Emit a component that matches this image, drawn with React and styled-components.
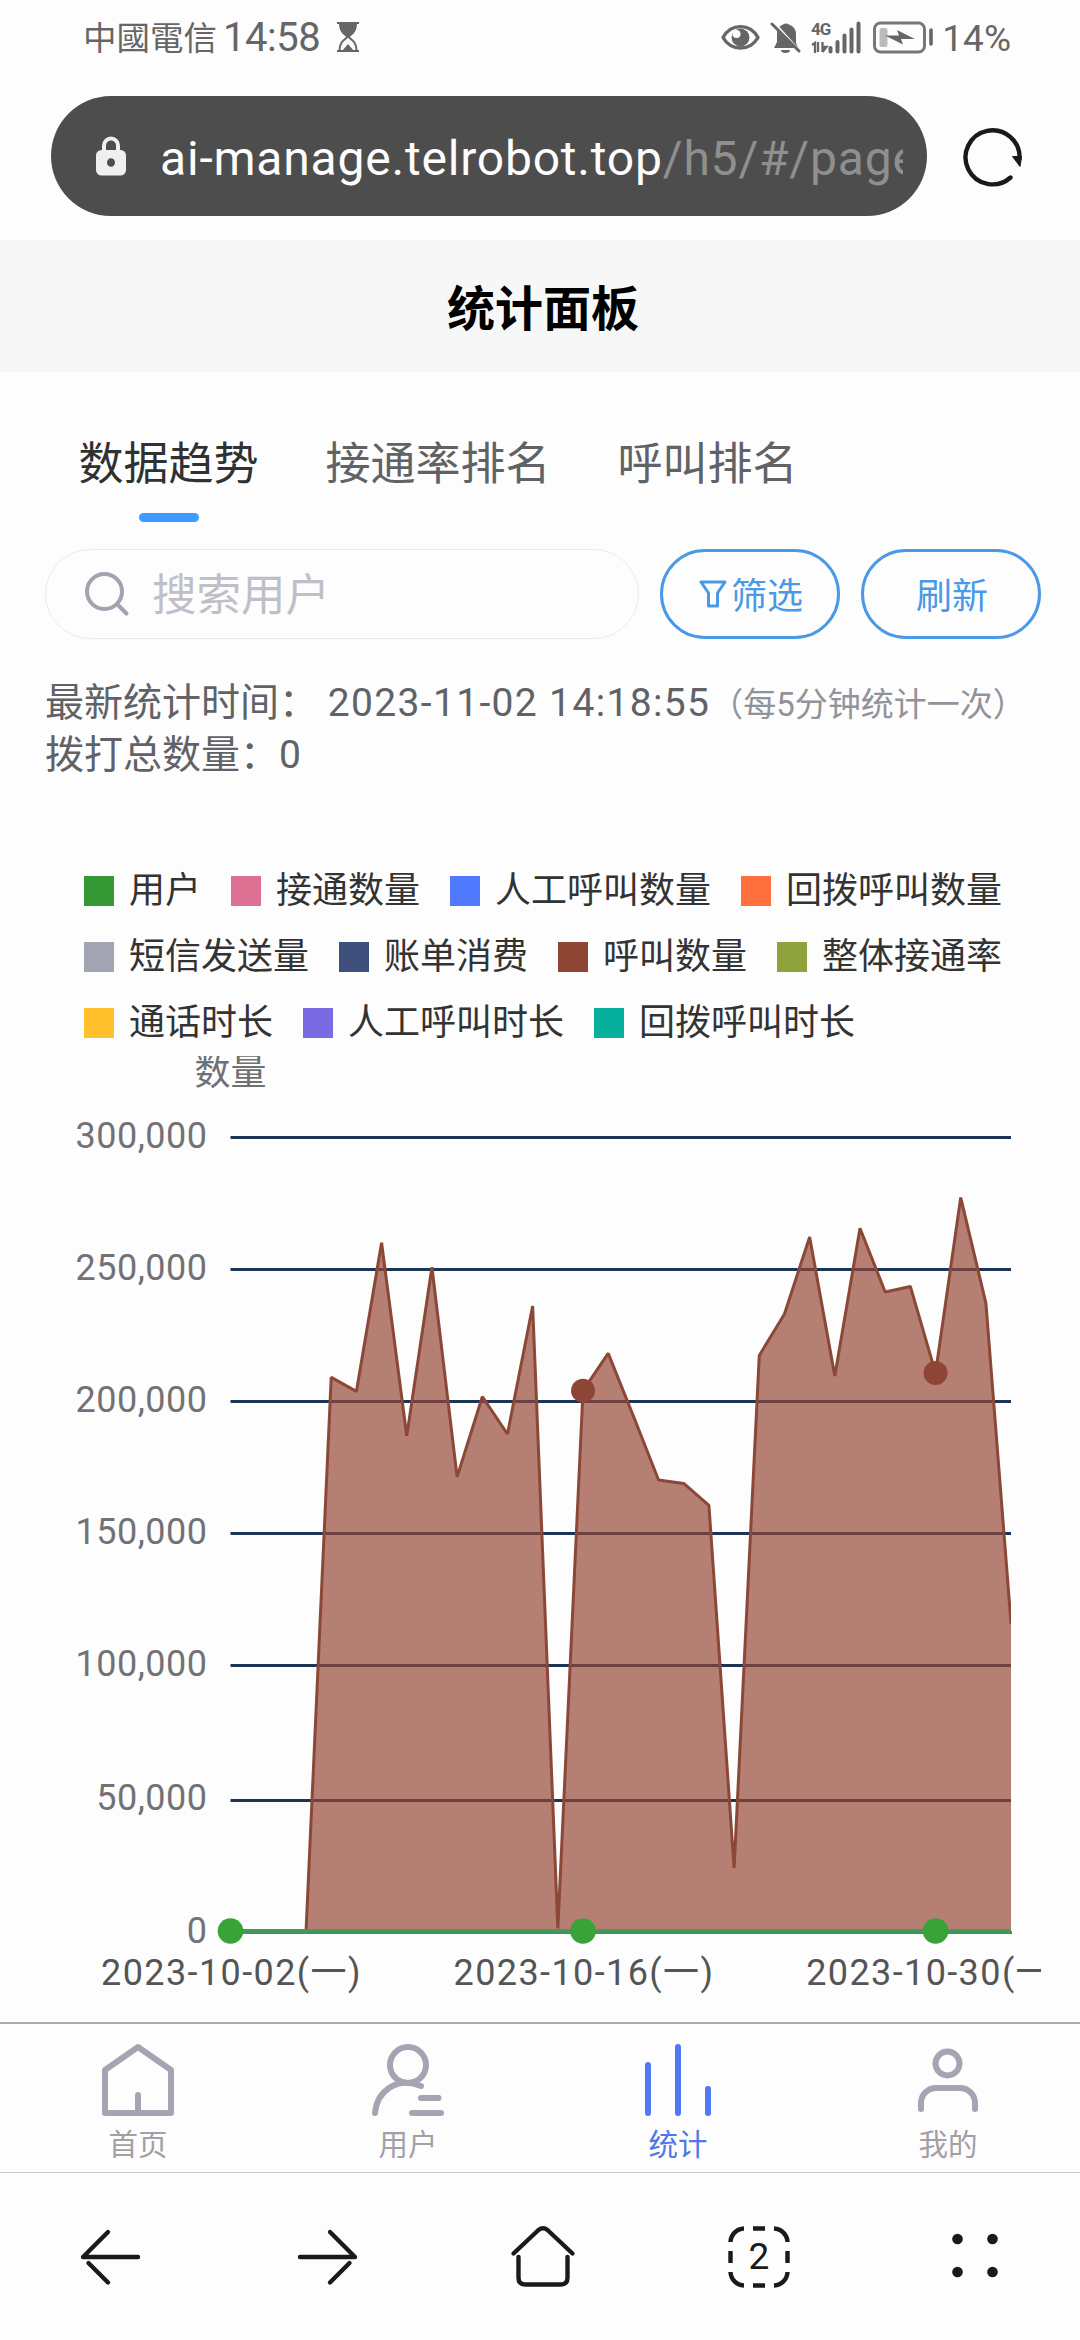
import React from "react";
import styled, { createGlobalStyle } from "styled-components";

const LEGEND = [
  [
    { label: "用户", color: "#349834" },
    { label: "接通数量", color: "#db7093" },
    { label: "人工呼叫数量", color: "#5079fd" },
    { label: "回拨呼叫数量", color: "#ff6f3e" },
  ],
  [
    { label: "短信发送量", color: "#a2a4b2" },
    { label: "账单消费", color: "#40507d" },
    { label: "呼叫数量", color: "#8f4534" },
    { label: "整体接通率", color: "#8fa33c" },
  ],
  [
    { label: "通话时长", color: "#ffc02b" },
    { label: "人工呼叫时长", color: "#7a6ae4" },
    { label: "回拨呼叫时长", color: "#06b09d" },
  ],
];

// daily call totals, 2023-10-02 to 2023-11-02
const CALLS = [
  0, 0, 0, 0, 209300, 204000, 260200, 187200, 251000, 171700, 202000, 187900,
  236300, 1000, 204300, 218400, 194700, 170500, 169200, 160900, 23800, 217600,
  233300, 262400, 209800, 265700, 241600, 243700, 211000, 277300, 237400,
  116100,
];

const Y_TICKS = [
  { label: "300,000", y: 81.5 },
  { label: "250,000", y: 213.5 },
  { label: "200,000", y: 345.5 },
  { label: "150,000", y: 477.5 },
  { label: "100,000", y: 609.5 },
  { label: "50,000", y: 744.5 },
];

const X_TICKS = [
  { label: "2023-10-02(一)", day: 0 },
  { label: "2023-10-16(一)", day: 14 },
  { label: "2023-10-30(一)", day: 28 },
];

const ZERO_Y = 875;
const LEFT = 230.5;
const RIGHT = 1011;
const dayX = (i) => LEFT + i * 25.18;
const valueY = (v) => ZERO_Y - (v / 300000) * 793.5;

const Chart = () => {
  const line = CALLS.map((v, i) => `${dayX(i)},${valueY(v)}`)
    .slice(3)
    .join(" ");

  return (
    <ChartSvg width="1080" height="966" viewBox="0 0 1080 966">
      <defs>
        <clipPath id="plot">
          <rect x="0" y="0" width={RIGHT} height="966" />
        </clipPath>
        <clipPath id="canvas">
          <rect x="0" y="0" width="1041" height="966" />
        </clipPath>
      </defs>
      <AxisName x="230.5" y="29">
        数量
      </AxisName>
      {Y_TICKS.map((tick) => (
        <g key={tick.label}>
          <line
            x1={LEFT}
            x2={RIGHT}
            y1={tick.y}
            y2={tick.y}
            stroke="#1c3557"
            strokeWidth="3"
          />
          <YLabel x="207.5" y={tick.label === "50,000" ? 753.5 : tick.y + 10.5}>
            {tick.label}
          </YLabel>
        </g>
      ))}
      <YLabel x="207.5" y="886.5">
        0
      </YLabel>
      <g clipPath="url(#plot)">
        <polygon
          points={`${line} ${dayX(31)},${ZERO_Y} ${dayX(3)},${ZERO_Y}`}
          fill="#944634"
          fillOpacity="0.69"
        />
        <polyline
          points={line}
          fill="none"
          stroke="#8c4837"
          strokeWidth="3"
          strokeLinejoin="bevel"
        />
      </g>
      <line
        x1={LEFT}
        x2={RIGHT + 1}
        y1="876.5"
        y2="876.5"
        stroke="#418c80"
        strokeWidth="3"
      />
      <line
        x1={LEFT}
        x2={RIGHT}
        y1="874.8"
        y2="874.8"
        stroke="#409a50"
        strokeWidth="3.6"
      />
      {[14, 28].map((d) => (
        <circle
          key={d}
          cx={dayX(d)}
          cy={valueY(CALLS[d])}
          r="12"
          fill="#8f4535"
        />
      ))}
      {X_TICKS.map((tick) => (
        <circle
          key={tick.day}
          cx={dayX(tick.day)}
          cy={ZERO_Y}
          r="12.8"
          fill="#38a437"
        />
      ))}
      <g clipPath="url(#canvas)">
        {X_TICKS.map((tick) => (
          <XLabel key={tick.day} x={dayX(tick.day) + 1} y="929">
            {tick.label}
          </XLabel>
        ))}
      </g>
    </ChartSvg>
  );
};

const StatusIcons = () => (
  <svg width="215" height="34" viewBox="0 0 215 34">
    {/* eye */}
    <path
      d="M3 17.5C11 3 30 3 38 17.5C30 31.500 11 31.500 3 17.5Z"
      fill="none"
      stroke="#666"
      strokeWidth="3.4"
      strokeLinejoin="round"
    />
    <circle cx="20.500" cy="17.500" r="9" fill="#666" />
    <circle cx="16.500" cy="14" r="4" fill="#fdfdfd" />
    {/* muted bell */}
    <path
      d="M54 28h24l-2-5V14c0-5-3-8-7-9.500a4.500 3 0 0 0-6 0c-4 1.500-6 5-6 9.500v8z"
      fill="#666"
    />
    <path d="M61 30h9a4.500 3 0 0 1-9 0z" fill="#666" />
    <path d="M53 2l27 30" stroke="#fdfdfd" strokeWidth="3" />
    <path
      d="M52 4l27 27"
      stroke="#666"
      strokeWidth="3"
      strokeLinecap="round"
    />
    {/* mobile signal */}
    <NetworkText x="91" y="15">
      4G
    </NetworkText>
    <path
      d="M92 25l3-2v10M98 22v10M102.500 22v10M102.500 32l4-5h-4"
      fill="none"
      stroke="#666"
      strokeWidth="2.300"
    />
    <path
      d="M110.500 28v3.500M117.500 22v9.500M124.500 15.500v16M131.500 9.500v22M138.500 3.500v28"
      stroke="#666"
      strokeWidth="4"
      strokeLinecap="round"
    />
    {/* battery */}
    <rect
      x="154.500"
      y="3"
      width="50"
      height="29"
      rx="6"
      fill="none"
      stroke="#777"
      strokeWidth="3"
    />
    <rect x="159.500" y="8" width="8" height="19" rx="2" fill="#bbb" />
    <path d="M165 15.500l14 0-2-5.500 18 9-14 0 2 5.500z" fill="#666" />
    <path
      d="M211 10v14"
      stroke="#666"
      strokeWidth="3.600"
      strokeLinecap="round"
    />
  </svg>
);

const Hourglass = () => (
  <svg width="24" height="32" viewBox="0 0 24 32">
    <path d="M1 2h22M1 30h22" stroke="#666" strokeWidth="2" />
    <path
      d="M3 2h18c0 8-3 10.500-7.500 14h-3C6 12.500 3 10 3 2z"
      fill="#666"
    />
    <path
      d="M3.500 30c0-8 3-10 8.500-14.500C17.500 20 20.500 22 20.500 30"
      fill="none"
      stroke="#666"
      strokeWidth="2"
    />
    <path d="M6 30l6-7 6 7z" fill="#666" />
  </svg>
);

const Lock = () => (
  <svg width="30" height="40" viewBox="0 0 30 40">
    <path
      d="M8 16V9.500a7 7 0 0 1 14 0V16"
      fill="none"
      stroke="#efefef"
      strokeWidth="4"
    />
    <rect y="14" width="30" height="25.500" rx="5.500" fill="#efefef" />
    <ellipse cx="15" cy="26.500" rx="4" ry="4.300" fill="#4d4d4d" />
  </svg>
);

const Reload = () => (
  <svg width="62" height="62" viewBox="0 0 62 62">
    <path
      d="M48.500 52.500A27 27 0 1 1 57.500 34"
      fill="none"
      stroke="#1a1a1a"
      strokeWidth="4.400"
      strokeLinecap="round"
    />
    <path
      d="M50.500 31.500l9 0-1.500 10z"
      fill="#1a1a1a"
      stroke="#1a1a1a"
      strokeLinejoin="round"
    />
  </svg>
);

const TABS = [
  {
    label: "首页",
    icon: <path d="M39 5L72 28V71H6V28ZM39 71V53" />,
  },
  {
    label: "用户",
    icon: (
      <>
        <circle cx="39" cy="23" r="18" />
        <path d="M6 71C8 49 28 34 52 44M52 56H69.500M43 71H72" />
      </>
    ),
  },
  {
    label: "统计",
    active: true,
    icon: <path d="M9 23V71M39 5V71M69 47V71" />,
  },
  {
    label: "我的",
    icon: (
      <>
        <circle cx="38.500" cy="21.500" r="12" />
        <path d="M12 67V61A15 15 0 0 1 27 46H51A15 15 0 0 1 66 61V67" />
      </>
    ),
  },
];

const App = () => {
  return (
    <Page>
      <GlobalStyle />
      <StatusBar>
        <Carrier>中國電信</Carrier>
        <Clock>14:58</Clock>
        <Hourglass />
        <StatusRight>
          <StatusIcons />
          <BatteryText>14%</BatteryText>
        </StatusRight>
      </StatusBar>
      <AddressRow>
        <AddressBar>
          <Lock />
          <Url>
            ai-manage.telrobot.top<span>/h5/#/page</span>
          </Url>
        </AddressBar>
        <Reload />
      </AddressRow>

      <TitleBar>统计面板</TitleBar>
      <Tabs>
        <Tab $active>数据趋势</Tab>
        <Tab>接通率排名</Tab>
        <Tab>呼叫排名</Tab>
      </Tabs>
      <SearchRow>
        <SearchBox>
          <svg width="46" height="46" viewBox="0 0 46 46">
            <g
              fill="none"
              stroke="#a2a2b0"
              strokeWidth="4"
              strokeLinecap="round"
            >
              <circle cx="20.500" cy="20.500" r="17.500" />
              <path d="M33.500 33.500L42.500 42.500" />
            </g>
          </svg>
          <span>搜索用户</span>
        </SearchBox>
        <PillButton>
          <svg width="28" height="28" viewBox="0 0 28 28">
            <path
              d="M2 2H26L18.500 13V26H9.500V13Z"
              fill="none"
              stroke="#4a99e6"
              strokeWidth="3"
              strokeLinejoin="round"
            />
          </svg>
          <span>筛选</span>
        </PillButton>
        <PillButton>
          <span>刷新</span>
        </PillButton>
      </SearchRow>
      <Summary>
        <p>
          最新统计时间： <DateText>2023-11-02 14:18:55</DateText>
          <Note>（每5分钟统计一次）</Note>
        </p>
        <p>拨打总数量：0</p>
      </Summary>
      <Legend>
        {LEGEND.map((row, i) => (
          <LegendRow key={i}>
            {row.map((item) => (
              <LegendItem key={item.label}>
                <Swatch $color={item.color} />
                {item.label}
              </LegendItem>
            ))}
          </LegendRow>
        ))}
      </Legend>
      <Chart />

      <TabBar>
        {TABS.map((tab) => (
          <TabBarItem key={tab.label} $active={tab.active}>
            <svg width="78" height="78" viewBox="0 0 78 78">
              {tab.icon}
            </svg>
            {tab.label}
          </TabBarItem>
        ))}
      </TabBar>
      <BrowserNav>
        <NavButton>
          <svg width="68" height="68" viewBox="0 0 68 68">
            <path d="M61 34H6L31 9M11.500 40L31 59.500" />
          </svg>
        </NavButton>
        <NavButton>
          <svg width="68" height="68" viewBox="0 0 68 68">
            <path d="M7 34H62L37 9M56.500 40L37 59.500" />
          </svg>
        </NavButton>
        <NavButton>
          <svg width="68" height="68" viewBox="0 0 68 68">
            <path d="M4.500 30.500L29.500 7Q34 3.500 38.500 7L63.500 30.500M9.500 34V54.500Q9.500 61.500 16 61.500H52Q58.500 61.500 58.500 54.500V34" />
          </svg>
        </NavButton>
        <NavButton>
          <TabCount>
            <svg width="68" height="68" viewBox="0 0 68 68">
              <g strokeLinecap="butt">
                <path d="M5.500 19A14 14 0 0 1 19 5.500M49 5.500A14 14 0 0 1 62.500 19M62.500 49A14 14 0 0 1 49 62.500M19 62.500A14 14 0 0 1 5.500 49" />
                <path d="M28 5.500H40M28 62.500H40M5.500 28V40M62.500 28V40" />
              </g>
            </svg>
            <span>2</span>
          </TabCount>
        </NavButton>
        <NavButton>
          <svg width="68" height="68" viewBox="0 0 68 68">
            <g fill="#1a1a1a" stroke="none">
              <circle cx="16.500" cy="16" r="5.300" />
              <circle cx="51.500" cy="16" r="5.300" />
              <circle cx="16.500" cy="49" r="5.300" />
              <circle cx="51.500" cy="49" r="5.300" />
            </g>
          </svg>
        </NavButton>
      </BrowserNav>
    </Page>
  );
};

const GlobalStyle = createGlobalStyle`
  * {
    box-sizing: border-box;
    margin: 0;
    padding: 0;
  }
  body {
    background: #fdfdfd;
    font-family: Roboto, "Noto Sans CJK SC", sans-serif;
  }
  svg {
    display: block;
    flex-shrink: 0;
  }
`;

const Page = styled.div`
  width: 1080px;
  height: 2340px;
  display: flex;
  flex-direction: column;
  overflow: hidden;
  background: #fdfdfd;
`;
const StatusBar = styled.header`
  height: 96px;
  padding: 0 69px 23px 83px;
  display: flex;
  align-items: center;
  color: #666;
`;
const Carrier = styled.span`
  margin-top: -2px;
  font-family: "Noto Sans CJK TC", sans-serif;
  font-size: 33.5px;
  line-height: 40px;
`;
const Clock = styled.span`
  margin: 3px 16px 0 6px;
  font-size: 40px;
  line-height: 40px;
  letter-spacing: -0.5px;
`;
const StatusRight = styled.div`
  margin-left: auto;
  display: flex;
  align-items: center;
`;
const BatteryText = styled.span`
  margin: 4px 0 0 7px;
  font-size: 37px;
  line-height: 40px;
`;
const NetworkText = styled.text`
  font: 700 17px Roboto, sans-serif;
  fill: #666;
  letter-spacing: -1px;
`;

const AddressRow = styled.div`
  height: 144px;
  padding: 0 56px 24px 51px;
  display: flex;
  align-items: center;
  justify-content: space-between;
`;
const AddressBar = styled.div`
  width: 876px;
  height: 120px;
  padding: 0 24px 0 45px;
  display: flex;
  align-items: center;
  border-radius: 60px;
  background: #4d4d4d;
`;
const Url = styled.div`
  flex: 1;
  margin-left: 34px;
  padding-top: 6px;
  overflow: hidden;
  white-space: nowrap;
  color: #fdfdfd;
  font-size: 48px;
  line-height: 70px;
  letter-spacing: 0.8px;

  span {
    color: #8f8f8f;
  }
`;

const TitleBar = styled.h1`
  height: 132px;
  padding: 0 0 3px 6px;
  display: flex;
  align-items: center;
  justify-content: center;
  background: #f7f7f7;
  color: #000;
  font-size: 48px;
  font-weight: 700;
`;
const Tabs = styled.nav`
  height: 132px;
  margin-top: 25px;
  padding-left: 45px;
  display: flex;
`;
const Tab = styled.div`
  position: relative;
  padding: 0 33.5px;
  font-size: 45px;
  line-height: 136px;
  color: ${(props) => (props.$active ? "#303133" : "#606266")};

  &::after {
    content: "";
    display: ${(props) => (props.$active ? "block" : "none")};
    position: absolute;
    left: calc(50% - 30px);
    bottom: 7px;
    width: 60px;
    height: 9px;
    border-radius: 4.5px;
    background: #3c9cff;
  }
`;
const SearchRow = styled.div`
  margin-top: 20px;
  padding: 0 39px 0 45px;
  display: flex;
  gap: 21px;
`;
const SearchBox = styled.div`
  flex: 1;
  height: 90px;
  padding-left: 38px;
  display: flex;
  align-items: center;
  gap: 22px;
  border: 1px solid #ebebeb;
  border-radius: 45px;
  color: #c0bfc8;
  font-size: 44.5px;

  span {
    padding-bottom: 5px;
  }
`;
const PillButton = styled.button`
  width: 180px;
  height: 90px;
  padding-left: 2px;
  display: flex;
  align-items: center;
  justify-content: center;
  gap: 4px;
  border: 3px solid #4a99e6;
  border-radius: 45px;
  background: none;
  color: #4a99e6;
  font-family: inherit;
  font-size: 36px;

  span {
    padding-bottom: 3px;
  }
`;

const Summary = styled.section`
  margin-top: 38px;
  padding-left: 45px;
  color: #606266;
  font-size: 39px;
  line-height: 52px;
  white-space: nowrap;

  p {
    height: 52px;
  }
`;
const DateText = styled.span`
  letter-spacing: 1.35px;
`;
const Note = styled.span`
  color: #909399;
  font-size: 33px;
`;

const Legend = styled.div`
  margin-top: 77px;
  padding-left: 84px;
`;
const LegendRow = styled.div`
  height: 66px;
  display: flex;
  align-items: center;
  gap: 30px;
`;
const LegendItem = styled.div`
  display: flex;
  align-items: center;
  gap: 15px;
  color: #333;
  font-size: 36px;
  line-height: 40px;
`;
const Swatch = styled.i`
  width: 30px;
  height: 30px;
  background: ${(props) => props.$color};
`;

const ChartSvg = styled.svg`
  font-family: Roboto, "Noto Sans CJK SC", sans-serif;
  font-size: 36px;
`;
const AxisName = styled.text`
  fill: #6e7073;
  text-anchor: middle;
`;
const YLabel = styled.text`
  fill: #727275;
  text-anchor: end;
  letter-spacing: 0.5px;
`;
const XLabel = styled.text`
  fill: #555;
  text-anchor: middle;
  letter-spacing: 1.4px;
`;

const TabBar = styled.nav`
  height: 151px;
  padding: 18px 0 0 3px;
  display: flex;
  border-top: 2px solid #aaa;
  border-bottom: 1px solid #c8c8c8;
`;
const TabBarItem = styled.div`
  width: 270px;
  flex-shrink: 0;
  display: flex;
  flex-direction: column;
  align-items: center;
  color: ${(props) => (props.$active ? "#4f76ea" : "#a0a0a6")};
  font-size: 29.5px;
  line-height: 50px;

  svg {
    fill: none;
    stroke: ${(props) => (props.$active ? "#5079f5" : "#a5a4b2")};
    stroke-width: 6;
    stroke-linecap: round;
    stroke-linejoin: round;
  }
`;
const BrowserNav = styled.nav`
  flex: 1;
  padding-left: 3px;
  display: flex;
  align-items: center;
`;
const NavButton = styled.div`
  width: 216px;
  flex-shrink: 0;
  display: flex;
  justify-content: center;

  svg {
    fill: none;
    stroke: #1a1a1a;
    stroke-width: 4.4;
    stroke-linecap: round;
    stroke-linejoin: round;
  }
`;
const TabCount = styled.div`
  display: grid;
  place-items: center;

  > * {
    grid-area: 1 / 1;
  }
  span {
    color: #1a1a1a;
    font-size: 37px;
    line-height: 40px;
  }
`;

export default App;
